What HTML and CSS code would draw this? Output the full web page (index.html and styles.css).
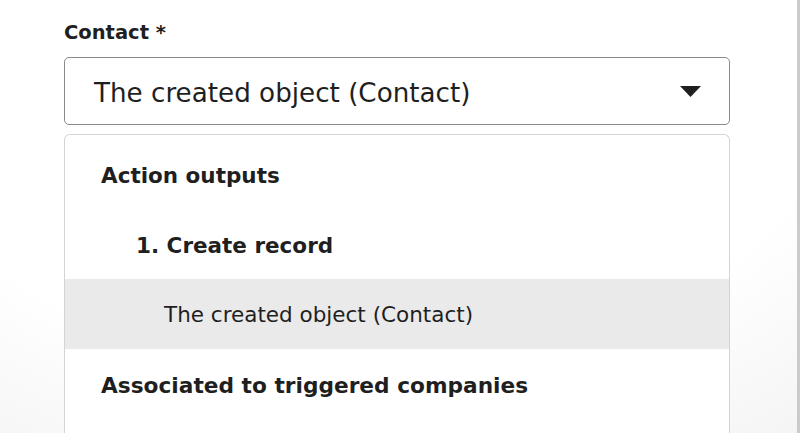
FILE: index.html
```html
<!DOCTYPE html>
<html lang="en">
<head>
<meta charset="utf-8">
<title>Contact field</title>
<link rel="stylesheet" href="styles.css">
</head>
<body>
  <div class="panel">
    <div class="field">
      <label class="field-label">Contact *</label>
      <div class="select">
        <span class="select-value">The created object (Contact)</span>
        <svg class="caret" width="21" height="11" viewBox="0 0 21 11" aria-hidden="true">
          <path d="M0 0 H21 L10.5 11 Z" fill="#1f1f1f"/>
        </svg>
      </div>
      <ul class="menu">
        <li class="menu-group">Action outputs</li>
        <li class="menu-subgroup">1. Create record</li>
        <li class="menu-option is-active">The created object (Contact)</li>
        <li class="menu-group">Associated to triggered companies</li>
      </ul>
    </div>
  </div>
</body>
</html>
```

FILE: styles.css
```css
html, body {
  margin: 0;
  height: 100%;
  overflow: hidden;
}

body {
  font-family: "DejaVu Sans", "Open Sans", sans-serif;
  color: #1f1f1f;
  background: radial-gradient(ellipse 780px 560px at 360px 0, #ffffff 66%, #f3f3f3 100%);
  border-right: 3px solid #cbcbcb;
  box-sizing: border-box;
}

.panel {
  padding: 20px 67px 0 64px;
}

.field {
  display: flex;
  flex-direction: column;
}

.field-label {
  font-weight: 700;
  font-size: 19.5px;
  line-height: 26px;
  margin-bottom: 11px;
}

.select {
  height: 68px;
  box-sizing: border-box;
  border: 1px solid #8a8a8a;
  border-radius: 5px;
  background: #fff;
  display: flex;
  align-items: center;
  justify-content: space-between;
  padding: 3px 28px 0 29px;
}

.select-value {
  font-size: 26.2px;
}

.caret {
  display: block;
  margin-top: -3px;
}

.menu {
  list-style: none;
  margin: 9px 0 0;
  padding: 4px 0 0;
  border: 1px solid #d4d4d4;
  border-bottom: none;
  border-radius: 6px 6px 0 0;
  background: #fff;
  height: 320px;
  overflow: hidden;
}

.menu li {
  height: 70px;
  box-sizing: border-box;
  display: flex;
  align-items: center;
  font-size: 21.5px;
}

.menu-group {
  font-weight: 700;
  padding: 3px 0 0 36px;
}

.menu-subgroup {
  font-weight: 700;
  padding: 3px 0 0 71px;
}

.menu-option {
  padding-left: 99px;
  font-size: 21px;
}

.menu-group:last-child {
  font-size: 21.7px;
}

.menu-option.is-active {
  background: #eaeaea;
}
```
